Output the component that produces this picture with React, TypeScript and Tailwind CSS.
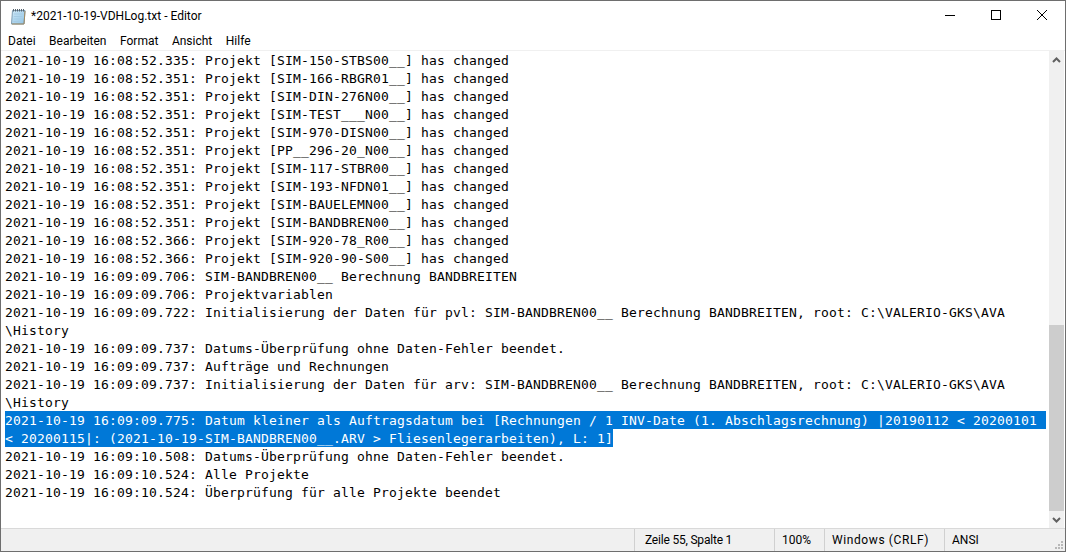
const logLines = [
  "2021-10-19 16:08:52.335: Projekt [SIM-150-STBS00__] has changed",
  "2021-10-19 16:08:52.351: Projekt [SIM-166-RBGR01__] has changed",
  "2021-10-19 16:08:52.351: Projekt [SIM-DIN-276N00__] has changed",
  "2021-10-19 16:08:52.351: Projekt [SIM-TEST___N00__] has changed",
  "2021-10-19 16:08:52.351: Projekt [SIM-970-DISN00__] has changed",
  "2021-10-19 16:08:52.351: Projekt [PP__296-20_N00__] has changed",
  "2021-10-19 16:08:52.351: Projekt [SIM-117-STBR00__] has changed",
  "2021-10-19 16:08:52.351: Projekt [SIM-193-NFDN01__] has changed",
  "2021-10-19 16:08:52.351: Projekt [SIM-BAUELEMN00__] has changed",
  "2021-10-19 16:08:52.351: Projekt [SIM-BANDBREN00__] has changed",
  "2021-10-19 16:08:52.366: Projekt [SIM-920-78_R00__] has changed",
  "2021-10-19 16:08:52.366: Projekt [SIM-920-90-S00__] has changed",
  "2021-10-19 16:09:09.706: SIM-BANDBREN00__ Berechnung BANDBREITEN",
  "2021-10-19 16:09:09.706: Projektvariablen",
  "2021-10-19 16:09:09.722: Initialisierung der Daten für pvl: SIM-BANDBREN00__ Berechnung BANDBREITEN, root: C:\\VALERIO-GKS\\AVA",
  "\\History",
  "2021-10-19 16:09:09.737: Datums-Überprüfung ohne Daten-Fehler beendet.",
  "2021-10-19 16:09:09.737: Aufträge und Rechnungen",
  "2021-10-19 16:09:09.737: Initialisierung der Daten für arv: SIM-BANDBREN00__ Berechnung BANDBREITEN, root: C:\\VALERIO-GKS\\AVA",
  "\\History",
];

const afterLines = [
  "2021-10-19 16:09:10.508: Datums-Überprüfung ohne Daten-Fehler beendet.",
  "2021-10-19 16:09:10.524: Alle Projekte",
  "2021-10-19 16:09:10.524: Überprüfung für alle Projekte beendet",
];

function NotepadIcon() {
  return (
    <svg width="16" height="17" viewBox="0 0 16 17" className="shrink-0">
      <defs>
        <linearGradient id="page" x1="0" y1="0" x2="1" y2="1">
          <stop offset="0" stopColor="#cfe8f7" />
          <stop offset="1" stopColor="#8fc3e4" />
        </linearGradient>
      </defs>
      <path d="M2.5 2.5h12.5l-1 13.5H1.5z" fill="url(#page)" stroke="#7f9db3" />
      <path d="M13.9 16h-12" stroke="#a08a62" />
      <path d="M15 3l-1 13" stroke="#a08a62" />
      <path d="M4 6h8.5M3.8 8.5h8.5M3.6 11h8.5M3.4 13.5h8.5" stroke="#a5cbe4" />
      <path d="M3.5 1v2.5M5.5 1v2.5M7.5 1v2.5M9.5 1v2.5M11.5 1v2.5M13.5 1v2.5" stroke="#56636e" />
    </svg>
  );
}

function StatusCell({ width, children }: { width: string; children: React.ReactNode }) {
  return (
    <div className={`${width} h-full flex items-center border-l border-[#d0d0d0] pl-[7px]`}>{children}</div>
  );
}

export default function App() {
  return (
    <div className="w-[1066px] h-[552px] flex flex-col bg-white border border-[#6e6e6e] text-black overflow-hidden font-['Roboto',sans-serif]">
      <div className="h-[30px] flex items-center shrink-0">
        <div className="flex items-center flex-1 pl-[9px] gap-[5px] text-[12px]">
          <NotepadIcon />
          <span>*2021-10-19-VDHLog.txt - Editor</span>
        </div>
        <div className="w-[46px] h-[28px] self-start flex items-center justify-center">
          <div className="w-[10px] h-px bg-black" />
        </div>
        <div className="w-[46px] h-[28px] self-start flex items-center justify-center">
          <div className="w-[10px] h-[10px] border border-black" />
        </div>
        <div className="w-[46px] h-[28px] self-start flex items-center justify-center">
          <svg width="10" height="10" viewBox="0 0 10 10">
            <path d="M0 0L10 10M10 0L0 10" stroke="black" strokeWidth="1" />
          </svg>
        </div>
      </div>

      <div className="h-[19px] flex items-center gap-[13.5px] pl-[7px] text-[12px] shrink-0">
        <span>Datei</span>
        <span>Bearbeiten</span>
        <span>Format</span>
        <span>Ansicht</span>
        <span>Hilfe</span>
      </div>

      <div className="flex-1 min-h-0 flex border-t border-[#f0f0f0]">
        <div className="flex-1 min-w-0 pl-1 font-['DejaVu_Sans_Mono',monospace] text-[13px] tracking-[0.174px] leading-[20px] whitespace-pre">
          {logLines.map((line, i) => (
            <div key={i} className="h-[18px]">{line}</div>
          ))}
          <div className="text-white">
            <div className="h-[18px] bg-[#0078d7] w-[1041px]">2021-10-19 16:09:09.775: Datum kleiner als Auftragsdatum bei [Rechnungen / 1 INV-Date (1. Abschlagsrechnung) |20190112 {"<"} 20200101</div>
            <div className="h-[18px] bg-[#0078d7] w-[608px]">{"<"} 20200115|: (2021-10-19-SIM-BANDBREN00__.ARV {">"} Fliesenlegerarbeiten), L: 1]</div>
          </div>
          {afterLines.map((line, i) => (
            <div key={i} className="h-[18px]">{line}</div>
          ))}
        </div>

        <div className="w-[15px] mr-px flex flex-col bg-[#f0f0f0] shrink-0">
          <div className="h-[17px] flex items-center justify-center shrink-0">
            <svg width="9" height="6" viewBox="0 0 9 6">
              <path d="M1 5L4.5 1.5L8 5" fill="none" stroke="#606060" strokeWidth="2" />
            </svg>
          </div>
          <div className="flex-1" />
          <div className="h-[186px] bg-[#cdcdcd] shrink-0" />
          <div className="h-[17px] flex items-center justify-center shrink-0">
            <svg width="9" height="6" viewBox="0 0 9 6">
              <path d="M1 1L4.5 4.5L8 1" fill="none" stroke="#606060" strokeWidth="2" />
            </svg>
          </div>
        </div>
      </div>

      <div className="h-[23px] flex items-center bg-[#f0f0f0] border-t border-[#d9d9d9] text-[12px] shrink-0">
        <div className="flex-1" />
        <StatusCell width="w-[140px]"><span className="pl-[3px] tracking-[-0.2px]">Zeile 55, Spalte 1</span></StatusCell>
        <StatusCell width="w-[50px]">100%</StatusCell>
        <StatusCell width="w-[120px]"><span className="tracking-[0.6px]">Windows (CRLF)</span></StatusCell>
        <StatusCell width="w-[121px]">
          <span className="flex-1">ANSI</span>
          <svg width="10" height="10" viewBox="0 0 10 10" className="self-end mb-px mr-px">
            <path d="M7 1h2v2h-2zM4 4h2v2h-2zM7 4h2v2h-2zM1 7h2v2h-2zM4 7h2v2h-2zM7 7h2v2h-2z" fill="#b8b8b8" />
          </svg>
        </StatusCell>
      </div>
    </div>
  );
}
